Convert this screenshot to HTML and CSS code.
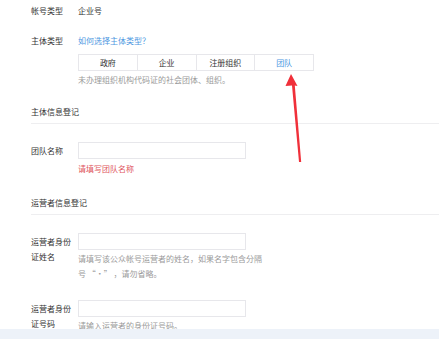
FILE: index.html
```html
<!DOCTYPE html>
<html lang="zh-CN">
<head>
    <meta charset="UTF-8">
    <title>注册信息</title>
    <link rel="stylesheet" href="styles.css">
</head>
<body>
    <div class="page">
        <div class="row row-first">
            <div class="label">帐号类型</div>
            <div class="content">企业号</div>
        </div>
        <div class="row row-type">
            <div class="label">主体类型</div>
            <div class="content">
                <a class="link" href="#">如何选择主体类型？</a>
                <div class="tabs">
                    <span class="tab">政府</span>
                    <span class="tab">企业</span>
                    <span class="tab">注册组织</span>
                    <span class="tab active">团队</span>
                </div>
                <p class="hint">未办理组织机构代码证的社会团体、组织。</p>
            </div>
        </div>

        <h3 class="section">主体信息登记</h3>
        <div class="row row-field">
            <div class="label label-inline">团队名称</div>
            <div class="content">
                <input class="input" type="text">
                <p class="error">请填写团队名称</p>
            </div>
        </div>

        <h3 class="section section-op">运营者信息登记</h3>
        <div class="row row-field">
            <div class="label">运营者身份证姓名</div>
            <div class="content">
                <input class="input" type="text">
                <p class="hint hint-wrap">请填写该公众帐号运营者的姓名，如果名字包含分隔号 “·” ，请勿省略。</p>
            </div>
        </div>
        <div class="row row-field row-last">
            <div class="label">运营者身份证号码</div>
            <div class="content">
                <input class="input" type="text">
                <p class="hint">请输入运营者的身份证号码。</p>
            </div>
        </div>
    </div>

    <svg class="arrow" width="30" height="100" viewBox="0 0 30 100">
        <polygon points="11,4 17.5,16 14.8,15.4 21.2,92 19,92 12,15.4 5.5,16" fill="#f0303a"/>
    </svg>
    <div class="footer-bar"></div>
</body>
</html>
```

FILE: styles.css
```css
body {
    margin: 0;
    font-family: "Noto Sans CJK SC", "Liberation Sans", sans-serif;
    font-size: 8px;
    line-height: 15px;
    color: #333;
    background: #fff;
}
.page {
    padding: 3px 0 0 31px;
}
.row {
    display: flex;
}
.label {
    width: 47px;
    flex-shrink: 0;
    color: #333;
}
.content {
    flex: 1;
}
.row-type {
    margin-top: 15px;
}
.link {
    color: #4d97df;
    text-decoration: none;
}
.tabs {
    display: flex;
    width: 236px;
    margin-top: 6px;
    border: 1px solid #e7e7eb;
    box-sizing: border-box;
}
.tab {
    flex: 1;
    text-align: center;
    color: #333;
    border-left: 1px solid #e7e7eb;
}
.tab:first-child {
    border-left: none;
}
.tab.active {
    color: #4d97df;
}
.hint {
    margin: 1px 0 0;
    color: #9a9a9a;
}
.hint-wrap {
    width: 186px;
    margin-top: 1px;
}
.section {
    margin: 17px 0 0;
    padding-bottom: 4px;
    font-size: 8px;
    font-weight: normal;
    line-height: 15px;
    color: #333;
    border-bottom: 1px solid #eeeef0;
}
.section-op {
    margin-top: 19px;
}
.row-field {
    margin-top: 18px;
}
.row-field .label {
    padding-top: 1px;
}
.label-inline {
    line-height: 15px;
}
.input {
    display: block;
    width: 168px;
    height: 17px;
    margin: 0;
    padding: 0 4px;
    box-sizing: border-box;
    border: 1px solid #e7e7eb;
    font-size: 8px;
}
.error {
    margin: 2px 0 0;
    color: #e0555c;
}
.row-last {
    margin-top: 19px;
}
.arrow {
    position: absolute;
    left: 280px;
    top: 70px;
}
.footer-bar {
    position: fixed;
    left: 0;
    right: 0;
    bottom: 0;
    height: 10px;
    background: #edf2f9;
}
```
